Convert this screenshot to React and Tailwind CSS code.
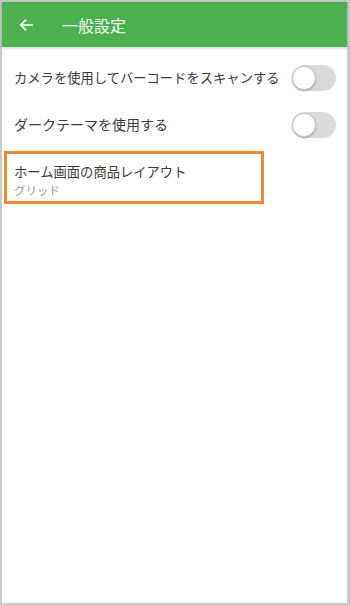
import React from "react";

function Toggle() {
  return (
    <div className="relative h-[26px] w-[44px] shrink-0 rounded-full bg-[#dadada]">
      <div className="absolute left-0 top-[1px] h-[24px] w-[24px] rounded-full border border-[#c4c4c4] bg-white shadow-[0_1px_2px_rgba(0,0,0,0.25)]" />
    </div>
  );
}

export default function App() {
  const font = { fontFamily: '"Noto Sans CJK JP", "Noto Sans", sans-serif' };

  return (
    <div
      className="flex h-[605px] w-[350px] flex-col border-b-2 border-l-2 border-r-[3px] border-t-2 border-[#c9c9c9] bg-white"
      style={font}
    >
      <div className="relative z-10 flex h-[45px] shrink-0 items-center bg-[#4caf50] shadow-[0_1px_3px_rgba(0,0,0,0.2)]">
        <svg
          className="ml-[15px] h-[18px] w-[18px]"
          viewBox="0 0 24 24"
          fill="none"
          stroke="white"
          strokeWidth="2.2"
          strokeLinecap="square"
        >
          <path d="M20 12H5.5" />
          <path d="M11.5 5.5L5 12l6.5 6.5" />
        </svg>
        <span className="ml-[27px] text-[16px] text-[#f4f9f4]">一般設定</span>
      </div>

      <div className="flex flex-col pt-[7px]">
        <div className="flex h-[47px] items-center justify-between pl-[12px] pr-[11px]">
          <span className="text-[13.3px] text-[#3b3b3b]">カメラを使用してバーコードをスキャンする</span>
          <Toggle />
        </div>
        <div className="flex h-[47px] items-center justify-between pl-[12px] pr-[11px]">
          <span className="text-[14px] text-[#3b3b3b]">ダークテーマを使用する</span>
          <Toggle />
        </div>

        <div className="ml-[2px] mt-[3px] flex h-[53px] w-[260px] flex-col border-[3px] border-[#f08833] pl-[7px] pt-[8px]">
          <span className="text-[13.3px] leading-[20px] text-[#3b3b3b]">ホーム画面の商品レイアウト</span>
          <span className="text-[11.5px] leading-[16px] text-[#9a9a9a]">グリッド</span>
        </div>
      </div>
    </div>
  );
}
